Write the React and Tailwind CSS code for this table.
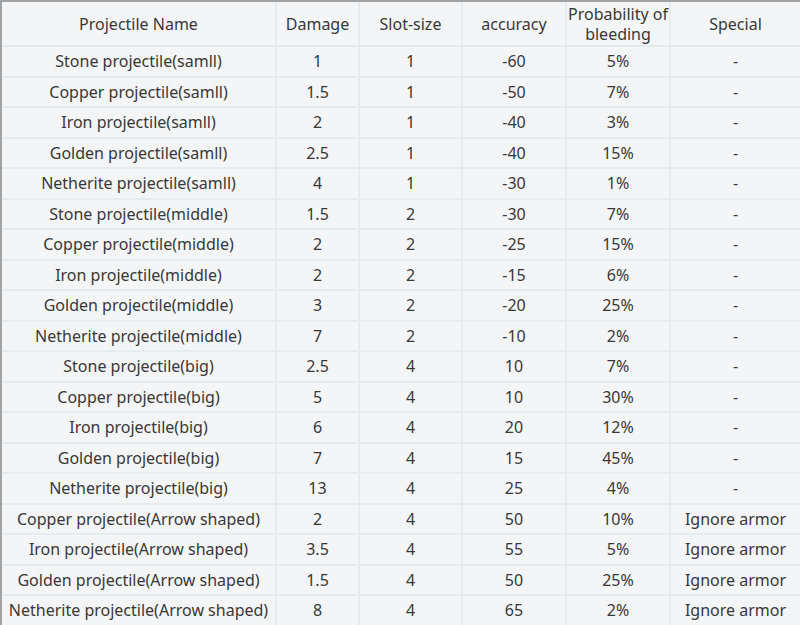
const rows = [
  ["Stone projectile(samll)", "1", "1", "-60", "5%", "-"],
  ["Copper projectile(samll)", "1.5", "1", "-50", "7%", "-"],
  ["Iron projectile(samll)", "2", "1", "-40", "3%", "-"],
  ["Golden projectile(samll)", "2.5", "1", "-40", "15%", "-"],
  ["Netherite projectile(samll)", "4", "1", "-30", "1%", "-"],
  ["Stone projectile(middle)", "1.5", "2", "-30", "7%", "-"],
  ["Copper projectile(middle)", "2", "2", "-25", "15%", "-"],
  ["Iron projectile(middle)", "2", "2", "-15", "6%", "-"],
  ["Golden projectile(middle)", "3", "2", "-20", "25%", "-"],
  ["Netherite projectile(middle)", "7", "2", "-10", "2%", "-"],
  ["Stone projectile(big)", "2.5", "4", "10", "7%", "-"],
  ["Copper projectile(big)", "5", "4", "10", "30%", "-"],
  ["Iron projectile(big)", "6", "4", "20", "12%", "-"],
  ["Golden projectile(big)", "7", "4", "15", "45%", "-"],
  ["Netherite projectile(big)", "13", "4", "25", "4%", "-"],
  ["Copper projectile(Arrow shaped)", "2", "4", "50", "10%", "Ignore armor"],
  ["Iron projectile(Arrow shaped)", "3.5", "4", "55", "5%", "Ignore armor"],
  ["Golden projectile(Arrow shaped)", "1.5", "4", "50", "25%", "Ignore armor"],
  ["Netherite projectile(Arrow shaped)", "8", "4", "65", "2%", "Ignore armor"],
];

const cols = "grid grid-cols-[275px_83px_103px_104px_104px_129px]";

export default function App() {
  return (
    <div className="w-[800px] h-[625px] bg-white overflow-hidden font-['Noto_Sans',sans-serif] text-[#383838]">
      <div className="border-t-2 border-l-2 border-[#a3a3a3] bg-[#f4f5f6]">
        {/* header */}
        <div className={`${cols} h-[45px] border-b-2 border-[#e4e9eb] text-[16px] leading-[20px]`}>
          <div className="flex items-center justify-center border-r-2 border-[#e6ecee]">Projectile Name</div>
          <div className="flex items-center justify-center border-r-2 border-[#e6ecee]">Damage</div>
          <div className="flex items-center justify-center border-r-2 border-[#e6ecee]">Slot-size</div>
          <div className="flex items-center justify-center border-r-2 border-[#e6ecee]">accuracy</div>
          <div className="flex items-center justify-center text-center border-r-2 border-[#e6ecee]">
            Probability of
            <br />
            bleeding
          </div>
          <div className="flex items-center justify-center">Special</div>
        </div>
        {rows.map((r, i) => (
          <div key={i} className={`${cols} h-[30.5px] border-b-2 border-[#e6ecee] text-[16px]`}>
            {r.map((c, j) => (
              <div
                key={j}
                className={`flex items-center justify-center whitespace-nowrap ${j < 5 ? "border-r-2 border-[#e6ecee]" : ""}`}
              >
                {c}
              </div>
            ))}
          </div>
        ))}
      </div>
    </div>
  );
}
